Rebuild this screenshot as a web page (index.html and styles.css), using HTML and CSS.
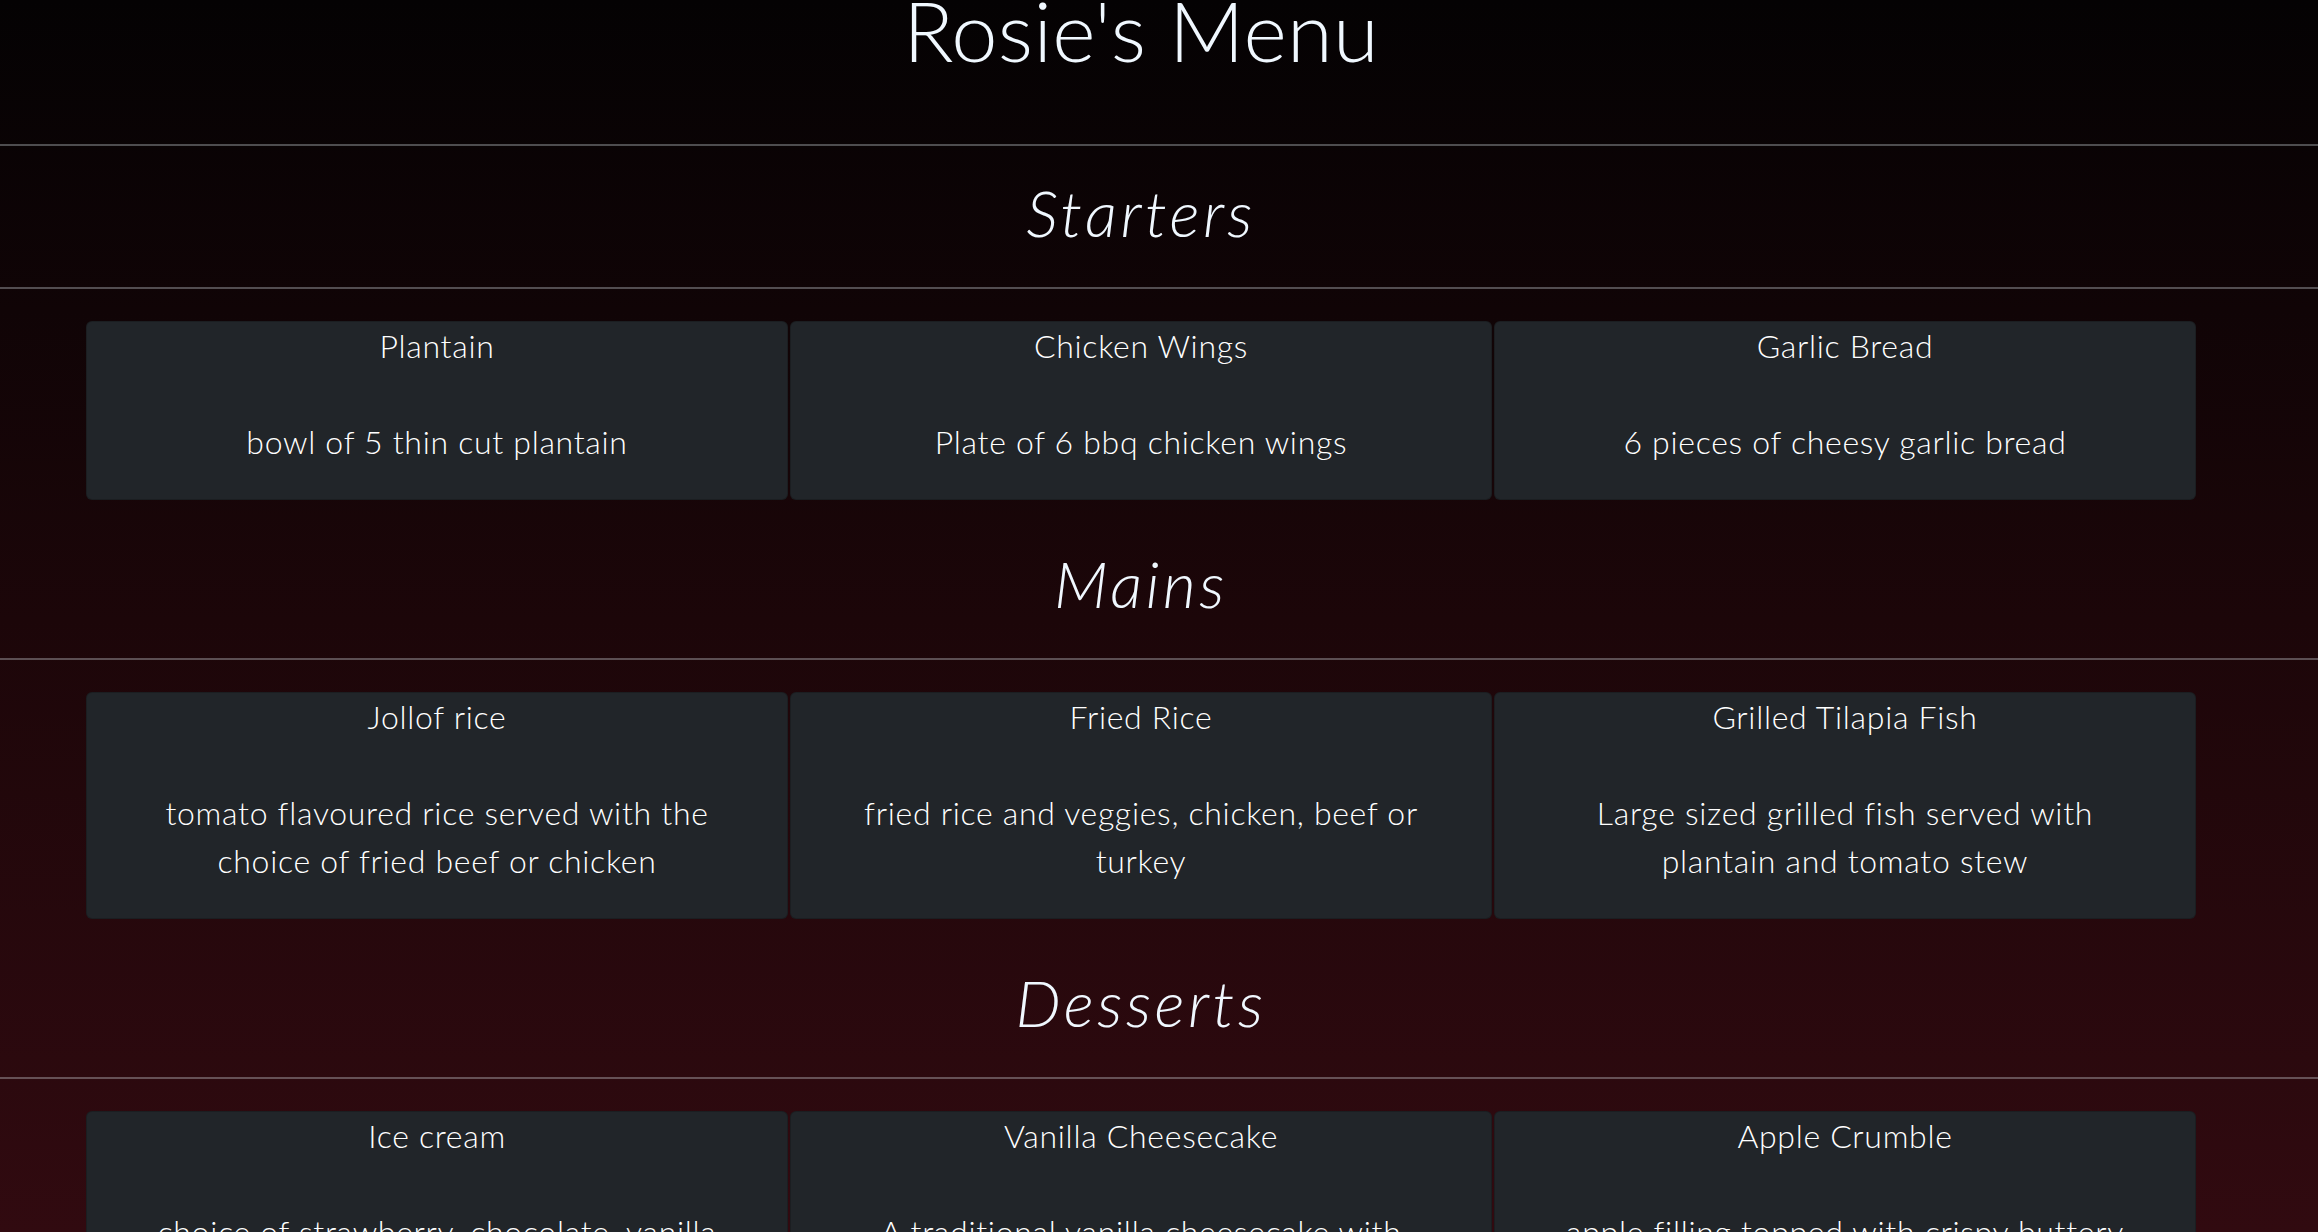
FILE: index.html
```html
<!DOCTYPE html>
<html lang="en">
<head>
<meta charset="utf-8">
<title>Rosie's Menu</title>
<link rel="stylesheet" href="styles.css">
</head>
<body>
<main class="page">
  <h1 class="title">Rosie's Menu</h1>
  <hr class="rule">

  <section class="section">
    <h2 class="section-title">Starters</h2>
    <hr class="rule">
    <div class="cards">
      <div class="card"><h3 class="card-title">Plantain</h3><p class="card-text">bowl of 5 thin cut plantain</p></div>
      <div class="card"><h3 class="card-title">Chicken Wings</h3><p class="card-text">Plate of 6 bbq chicken wings</p></div>
      <div class="card"><h3 class="card-title">Garlic Bread</h3><p class="card-text">6 pieces of cheesy garlic bread</p></div>
    </div>
  </section>

  <section class="section">
    <h2 class="section-title">Mains</h2>
    <hr class="rule">
    <div class="cards">
      <div class="card"><h3 class="card-title">Jollof rice</h3><p class="card-text">tomato flavoured rice served with the choice of fried beef or chicken</p></div>
      <div class="card"><h3 class="card-title">Fried Rice</h3><p class="card-text">fried rice and veggies, chicken, beef or turkey</p></div>
      <div class="card"><h3 class="card-title">Grilled Tilapia Fish</h3><p class="card-text">Large sized grilled fish served with plantain and tomato stew</p></div>
    </div>
  </section>

  <section class="section">
    <h2 class="section-title">Desserts</h2>
    <hr class="rule">
    <div class="cards">
      <div class="card"><h3 class="card-title">Ice cream</h3><p class="card-text">choice of strawberry, chocolate, vanilla or mint ice cream</p></div>
      <div class="card"><h3 class="card-title">Vanilla Cheesecake</h3><p class="card-text">A traditional vanilla cheesecake with biscuit base and berry compote</p></div>
      <div class="card"><h3 class="card-title">Apple Crumble</h3><p class="card-text">apple filling topped with crispy buttery crumble and custard</p></div>
    </div>
  </section>
</main>
</body>
</html>
```

FILE: styles.css
```css
html {
  background: #2f0a0f;
}
body {
  margin: 0;
  min-height: 1232px;
  background: linear-gradient(to bottom, #040203 0px, #1c0609 620px, #310a10 1232px);
  background-repeat: no-repeat;
  font-family: "Lato", "Open Sans", sans-serif;
  font-weight: 300;
  color: #f0f8ff;
}
.page {
  padding-bottom: 60px;
}
.title {
  margin: 0;
  padding-right: 36px;
  font-size: 83px;
  font-weight: 300;
  line-height: 60px;
  text-align: center;
  letter-spacing: 0.3px;
  color: #f0f8ff;
}
.rule {
  margin: 0;
  border: 0;
  height: 2px;
  background: rgba(240, 248, 255, 0.3);
}
.title + .rule {
  margin-top: 84px;
}
.section-title {
  margin: 45px 0 36px;
  padding-right: 36px;
  font-size: 64px;
  font-style: italic;
  font-weight: 300;
  line-height: 77px;
  text-align: center;
  letter-spacing: 3.5px;
  color: #f0f8ff;
}
.section:first-of-type .section-title {
  margin-top: 28px;
}
.cards {
  margin: 32px 0 0 86px;
  display: grid;
  grid-template-columns: repeat(3, 702px);
  gap: 2px;
}
.card {
  background: #212529;
  border: 1px solid rgba(0, 0, 0, 0.18);
  border-radius: 6px;
  padding: 0 12px 33px;
  text-align: center;
  color: #ffffff;
}
.card-title {
  margin: 0 0 48px;
  font-size: 32px;
  font-weight: 300;
  line-height: 48px;
  letter-spacing: 0.7px;
}
.card-text {
  margin: 0;
  padding: 0 43px;
  font-size: 32px;
  line-height: 48px;
  letter-spacing: 0.7px;
}
```
